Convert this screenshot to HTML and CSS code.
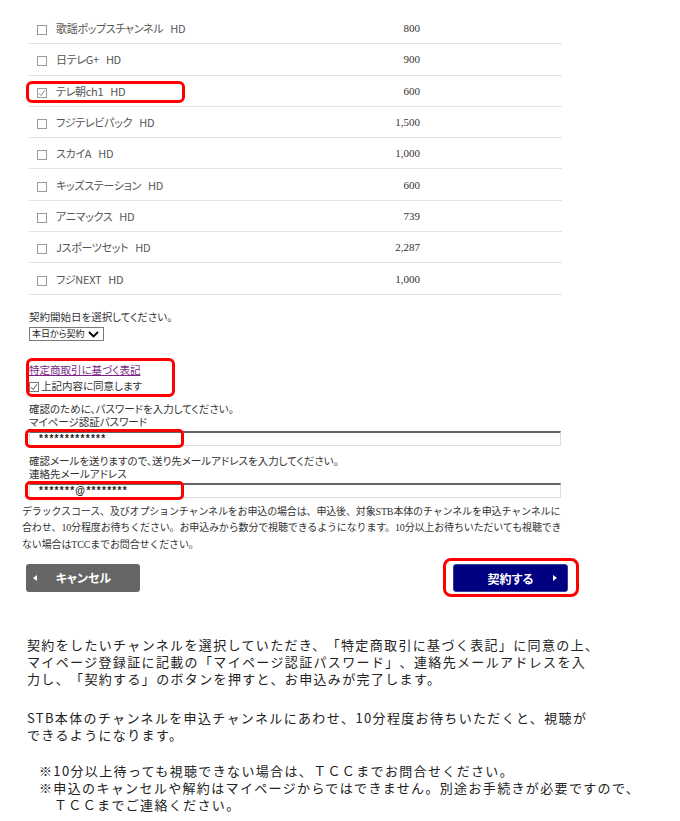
FILE: index.html
```html
<!DOCTYPE html>
<html lang="ja">
<head>
  <meta charset="UTF-8">
  <meta name="viewport" content="width=device-width, initial-scale=1.0">
  <title>チャンネル契約</title>
  <link rel="stylesheet" href="styles.css">
</head>
<body>
  <div class="page">
    <ul class="channels">
      <li class="channel"><span class="box"></span><span class="ch-name">歌謡ポップスチャンネル<span class="hd">HD</span></span><span class="ch-price">800</span></li>
      <li class="channel"><span class="box"></span><span class="ch-name">日テレG+<span class="hd">HD</span></span><span class="ch-price">900</span></li>
      <li class="channel marked">
        <span class="box checked"><svg width="8" height="8" viewBox="0 0 8 8"><path d="M1 4.2 L3 6.5 L7 1.2" fill="none" stroke="#888" stroke-width="1"/></svg></span><span class="ch-name">テレ朝ch1<span class="hd">HD</span></span><span class="ch-price">600</span>
      </li>
      <li class="channel"><span class="box"></span><span class="ch-name">フジテレビパック<span class="hd">HD</span></span><span class="ch-price">1,500</span></li>
      <li class="channel"><span class="box"></span><span class="ch-name">スカイA<span class="hd">HD</span></span><span class="ch-price">1,000</span></li>
      <li class="channel"><span class="box"></span><span class="ch-name">キッズステーション<span class="hd">HD</span></span><span class="ch-price">600</span></li>
      <li class="channel"><span class="box"></span><span class="ch-name">アニマックス<span class="hd">HD</span></span><span class="ch-price">739</span></li>
      <li class="channel"><span class="box"></span><span class="ch-name">Jスポーツセット<span class="hd">HD</span></span><span class="ch-price">2,287</span></li>
      <li class="channel"><span class="box"></span><span class="ch-name">フジNEXT<span class="hd">HD</span></span><span class="ch-price">1,000</span></li>
    </ul>

    <div class="start">
      <div class="label">契約開始日を選択してください。</div>
      <span class="select">
        <select>
          <option>本日から契約</option>
        </select>
        <svg class="chevron" width="11" height="7" viewBox="0 0 11 7"><path d="M1 1 L5.5 5.5 L10 1" fill="none" stroke="#000" stroke-width="1.8"/></svg>
      </span>
    </div>

    <div class="agree">
      <a href="#" class="law-link">特定商取引に基づく表記</a>
      <div class="agree-check">
        <span class="box checked dark"><svg width="8" height="8" viewBox="0 0 8 8"><path d="M1 4.2 L3 6.5 L7 1.2" fill="none" stroke="#555" stroke-width="1"/></svg></span>上記内容に同意します
      </div>
    </div>

    <div class="field">
      <div class="label">確認のために、パスワードを入力してください。</div>
      <div class="label">マイページ認証パスワード</div>
      <div class="input-wrap marked-input">
        <input type="text" class="text-input" value="*************">
      </div>
    </div>

    <div class="field field-mail">
      <div class="label">確認メールを送りますので、送り先メールアドレスを入力してください。</div>
      <div class="label">連絡先メールアドレス</div>
      <div class="input-wrap marked-input">
        <input type="text" class="text-input" value="*******@********">
      </div>
    </div>

    <p class="notice">
      デラックスコース、及びオプションチャンネルをお申込の場合は、申込後、対象STB本体のチャンネルを申込チャンネルに<br>
      合わせ、10分程度お待ちください。お申込みから数分で視聴できるようになります。10分以上お待ちいただいても視聴でき<br>
      ない場合はTCCまでお問合せください。
    </p>

    <div class="actions">
      <button class="btn btn-cancel">
        <svg width="4" height="6" viewBox="0 0 4 6"><path d="M4 0 L0 3 L4 6 Z" fill="#fff"/></svg>
        <span>キャンセル</span>
      </button>
      <div class="submit-frame">
        <button class="btn btn-submit">
          <span>契約する</span>
          <svg width="4" height="6" viewBox="0 0 4 6"><path d="M0 0 L4 3 L0 6 Z" fill="#fff"/></svg>
        </button>
      </div>
    </div>

    <div class="guide">
      <p class="guide-p1">契約をしたいチャンネルを選択していただき、「特定商取引に基づく表記」に同意の上、<br>マイページ登録証に記載の「マイページ認証パスワード」、連絡先メールアドレスを入<br>力し、「契約する」のボタンを押すと、お申込みが完了します。</p>
      <p class="guide-p2">STB本体のチャンネルを申込チャンネルにあわせ、10分程度お待ちいただくと、視聴が<br>できるようになります。</p>
      <ul class="guide-notes">
        <li>※10分以上待っても視聴できない場合は、ＴＣＣまでお問合せください。</li>
        <li>※申込のキャンセルや解約はマイページからではできません。別途お手続きが必要ですので、<br>ＴＣＣまでご連絡ください。</li>
      </ul>
    </div>
  </div>
</body>
</html>
```

FILE: styles.css
```css
/* General */
body {
  margin: 0;
  background-color: #ffffff;
  font-family: "Noto Sans CJK JP", sans-serif;
  color: #333333;
}

.page {
  padding-left: 22px;
  padding-bottom: 10px;
}

/* Channel list */
.channels {
  list-style: none;
  margin: 13px 0 0 7px;
  padding: 0;
  width: 533px;
}

.channel {
  display: flex;
  align-items: center;
  height: 30.3px;
  padding: 0 142px 0 8px;
  border-bottom: 1px solid #e2e2e2;
  font-size: 11px;
  color: #555555;
}

.channel.marked {
  position: relative;
}

.channel.marked::after {
  content: '';
  position: absolute;
  left: -3px;
  top: 5px;
  width: 159px;
  height: 22px;
  border: 3px solid #ff0000;
  border-radius: 6px;
  box-sizing: border-box;
}

.box {
  display: inline-flex;
  align-items: center;
  justify-content: center;
  width: 10px;
  height: 10px;
  margin: 4px 9px 0 0;
  border: 1px solid #9a9a9a;
  box-sizing: border-box;
  flex-shrink: 0;
  background-color: #fff;
}

.ch-name {
  flex: 1;
  font-feature-settings: "palt";
  letter-spacing: -0.3px;
}

.hd {
  margin-left: 7px;
}

.ch-price {
  font-family: "Liberation Serif", serif;
  font-size: 11px;
  color: #333333;
}

/* Form */
.label {
  font-size: 10.5px;
  line-height: 13px;
  font-feature-settings: "palt";
  color: #333333;
}

.start {
  margin-top: 15px;
  padding-left: 7px;
}

.start .label {
  line-height: 14px;
}

.select {
  position: relative;
  display: flex;
  width: max-content;
  margin-top: 3px;
}

.select select {
  appearance: none;
  -webkit-appearance: none;
  display: block;
  width: 75px;
  height: 14px;
  margin: 0;
  padding: 0 0 0 2px;
  border: 1px solid #7a7a7a;
  border-radius: 0;
  background-color: #fff;
  font-family: "Noto Sans CJK JP", sans-serif;
  font-size: 9px;
  line-height: 12px;
  color: #222;
  font-feature-settings: "palt";
}

.select .chevron {
  position: absolute;
  right: 5px;
  top: 4px;
  pointer-events: none;
}

.agree {
  width: 149px;
  margin: 17px 0 0 4px;
  padding: 1px 0 0 0;
  border: 3px solid #ff0000;
  border-radius: 6px;
  box-sizing: border-box;
  height: 39px;
  font-size: 10.5px;
  line-height: 16px;
  font-feature-settings: "palt";
}

.law-link {
  color: #7a1f86;
  text-decoration: underline;
}

.agree-check {
  display: flex;
  align-items: center;
  color: #333333;
}

.agree-check .box {
  margin: 2px 2px 0 0;
  border-color: #777;
}

.field {
  margin-top: 5px;
  padding-left: 7px;
}

.field-mail {
  margin-top: 8px;
}

.input-wrap {
  margin-top: 3px;
  width: 532px;
}

.marked-input {
  position: relative;
}

.marked-input::after {
  content: '';
  position: absolute;
  left: -4px;
  top: -2px;
  width: 159px;
  height: 19px;
  border: 3px solid #ff0000;
  border-radius: 5px;
  box-sizing: border-box;
}

.text-input {
  display: block;
  width: 532px;
  height: 15px;
  margin: 0;
  padding: 0 0 0 9px;
  box-sizing: border-box;
  border: 1px solid #dddddd;
  border-top: 2px solid #666666;
  font-family: "Liberation Sans", sans-serif;
  font-size: 10px;
  font-weight: bold;
  letter-spacing: 1.3px;
  color: #222;
  background-color: #fff;
}

.notice {
  margin: 6px 0 0 0;
  font-family: "Liberation Serif", "Noto Sans CJK JP", serif;
  font-size: 10px;
  line-height: 16.5px;
  letter-spacing: -0.15px;
  color: #333333;
  white-space: nowrap;
}

/* Buttons */
.actions {
  display: flex;
  justify-content: space-between;
  align-items: center;
  width: 553px;
  margin: 5px 0 0 4px;
}

.btn {
  display: flex;
  align-items: center;
  height: 28px;
  border: none;
  border-radius: 3px;
  color: #fff;
  font-family: "Noto Sans CJK JP", sans-serif;
  font-size: 12px;
  font-weight: bold;
  font-feature-settings: "palt";
  cursor: pointer;
}

.btn span {
  flex: 1;
  text-align: center;
}

.btn-cancel {
  width: 114px;
  padding: 0 10px 0 7px;
  background-color: #666666;
}

.btn-submit {
  width: 115px;
  padding: 0 10px 0 14px;
  background-color: #000080;
  border: 1px solid #3a3a99;
}

.submit-frame {
  padding: 3px 8px 2px 7px;
  border: 3px solid #ff0000;
  border-radius: 8px;
}

/* Guide text */
.guide {
  margin-top: 39px;
  padding-left: 5px;
  font-size: 13px;
  line-height: 17px;
  letter-spacing: 1.35px;
  text-spacing-trim: space-all;
  color: #222222;
}

.guide p {
  margin: 0;
}

.guide-p1 {
  margin-bottom: 22px !important;
}

.guide-p2 {
  margin-bottom: 19px !important;
}

.guide-notes {
  list-style: none;
  margin: 0;
  padding: 0 0 0 12px;
}

.guide-notes li {
  padding-left: 15px;
  text-indent: -15px;
}
```
